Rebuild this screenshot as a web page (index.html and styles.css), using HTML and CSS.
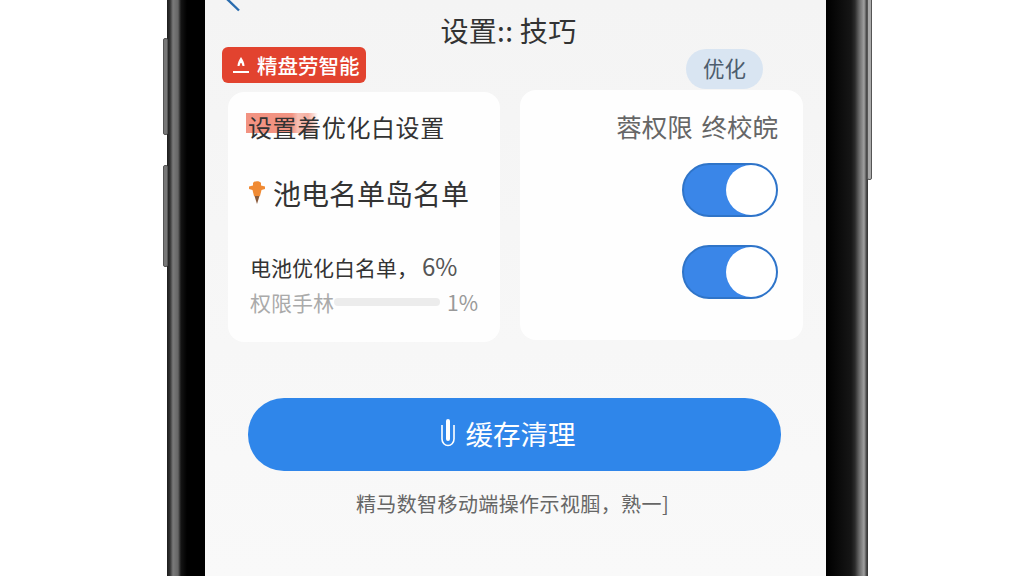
FILE: index.html
```html
<!doctype html>
<html lang="zh-CN">
<head>
<title>设置</title>
<link rel="stylesheet" href="styles.css">
</head>
<body>
	<div class="phone">
		<div class="sideKey keyA"></div>
		<div class="sideKey keyB"></div>
		<div class="sideKey keyC"></div>

		<div class="screen">
			<svg class="backArrow" width="20" height="14" viewBox="0 0 20 14"><path d="M2 -1 L14 10.500" fill="none" stroke="#2a6cae" stroke-width="2.400"/></svg>

			<h1 class="title">设置:: 技巧</h1>

			<div class="topRow">
				<div class="tag">
					<svg width="20" height="22" viewBox="0 0 20 22"><path d="M10 3 C12 6 13.500 9 13.500 12 L11.500 12 L10.500 9 L9.500 9 L8.500 12 L6.500 12 C6.500 9 8 6 10 3 Z" fill="#fff"/><rect x="2" y="17" width="16" height="2" fill="#fff"/></svg>
					<span>精盘劳智能</span>
				</div>
				<div class="pill">优化</div>
			</div>

			<div class="cards">
				<div class="card cardLeft">
					<div class="cardHead">设置着优化白设置</div>
					<div class="listName">
						<svg width="18" height="26" viewBox="0 0 18 26"><path d="M5 3 C6 0.500 12 0.500 13 3 L13 5.500 L17 6.500 L17 9 L13.500 10 L12 16 L6 16 L4.500 10 L1 9 L1 6.500 L5 5.500 Z" fill="#f08a33"/><path d="M6.500 16 L11.500 16 L9 24 Z" fill="#8a5a3a"/></svg>
						<span>池电名单岛名单</span>
					</div>
					<div class="statMain">电池优化白名单，<span class="statNum">6%</span></div>
					<div class="statSub">
						<span class="subLabel">权限手林</span>
						<div class="bar"></div>
						<span class="subNum">1%</span>
					</div>
				</div>

				<div class="card cardRight">
					<div class="rightHead">蓉权限 终校皖</div>
					<div class="toggle"><div class="knob"></div></div>
					<div class="toggle"><div class="knob"></div></div>
				</div>
			</div>

			<div class="cleanBtn">
				<svg width="16" height="28" viewBox="0 0 16 28"><path d="M2 6 L2 20 C2 24 5 26.500 8 26.500 C11 26.500 14 24 14 20 L14 6" fill="none" stroke="#fff" stroke-width="1.600"/><path d="M8 2 L8 20" stroke="#fff" stroke-width="4" stroke-linecap="round"/></svg>
				<span>缓存清理</span>
			</div>

			<p class="caption">精马数智移动端操作示视腘，熟一]</p>
		</div>
	</div>
</body>
</html>
```
FILE: styles.css
```css
html {
	height: 100%;
}
body {
	margin: 0;
	height: 576px;
	overflow: hidden;
	background-color: #fff;
	font-family: "Noto Sans CJK SC", "Noto Sans", sans-serif;
}

.phone {
	position: relative;
	box-sizing: border-box;
	display: flex;
	width: 701px;
	height: 576px;
	margin-left: 167px;
	padding: 0 42px 0 38px;
	background: linear-gradient(to right,
		#1c1c1c 0, #333 3px, #7a7a7a 6px, #666 11px, #141414 14px, #000 20px,
		#000 660px, #161616 684px, #2c2c2c 688px, #666 692px, #a0a0a0 697px, #3a3a3a 700px);
}
.sideKey {
	position: absolute;
	width: 5px;
	background-color: #777;
	border: 1px solid #555;
	box-sizing: border-box;
	border-radius: 2px;
}
.keyA {
	left: -4px;
	top: 38px;
	height: 97px;
}
.keyB {
	left: -4px;
	top: 165px;
	height: 102px;
}
.keyC {
	right: -4px;
	top: -4px;
	height: 184px;
	background-color: #aaa;
}

.screen {
	position: relative;
	width: 621px;
	height: 576px;
	overflow: hidden;
	background: linear-gradient(#f4f4f4, #f9f9f9);
}
.backArrow {
	position: absolute;
	left: 20px;
	top: 0;
}

.title {
	margin: 0;
	padding: 14px 14px 0 0;
	height: 33px;
	font-size: 28px;
	font-weight: 400;
	letter-spacing: 0.300px;
	line-height: 33px;
	text-align: center;
	color: #333;
}

.topRow {
	display: flex;
	justify-content: space-between;
	align-items: flex-start;
	height: 43px;
	padding: 0 63px 0 17px;
}
.tag {
	display: flex;
	align-items: center;
	gap: 6px;
	box-sizing: border-box;
	width: 144px;
	height: 36px;
	padding: 0 0 1px 9px;
	border-radius: 6px;
	background-color: #e2432f;
	color: #fff;
	font-size: 20.500px;
	font-weight: 500;
}
.pill {
	width: 77px;
	height: 40px;
	margin-top: 2px;
	border-radius: 20px;
	background-color: #d9e5f2;
	color: #4d5d6e;
	font-size: 21.500px;
	line-height: 38px;
	text-align: center;
}

.cards {
	display: flex;
	align-items: flex-start;
	gap: 20px;
	padding-left: 23px;
}
.card {
	box-sizing: border-box;
	height: 250px;
	border-radius: 16px;
	background-color: #fefefe;
}
.cardLeft {
	width: 272px;
	margin-top: 2px;
	padding: 19px 20px 0 20px;
}
.cardRight {
	display: flex;
	flex-direction: column;
	align-items: flex-end;
	width: 283px;
	padding: 18px 25px 0 0;
}

.cardHead {
	position: relative;
	isolation: isolate;
	font-size: 24px;
	letter-spacing: 0.600px;
	line-height: 32px;
	color: #333;
}
.cardHead::before {
	content: "";
	position: absolute;
	z-index: -1;
	left: -2px;
	top: 2px;
	width: 72px;
	height: 20px;
	background: linear-gradient(to right, #f0806c 0, #f0806c 46px, #f6b5a8 52px, #f4a090 62px, rgba(240, 128, 108, 0) 72px);
	opacity: 0.85;
}
.listName {
	display: flex;
	align-items: center;
	gap: 7px;
	margin-top: 30px;
	font-size: 28px;
	line-height: 40px;
	color: #333;
}
.statMain {
	margin-top: 38px;
	padding-left: 2px;
	font-size: 21px;
	line-height: 30px;
	color: #333;
}
.statNum {
	margin-left: 4px;
	font-size: 24px;
	color: #555;
}
.statSub {
	display: flex;
	align-items: center;
	margin-top: 5px;
	padding-left: 2px;
	font-size: 21px;
	line-height: 30px;
	color: #aaa;
}
.subLabel {
	flex-shrink: 0;
	white-space: nowrap;
}
.bar {
	flex-shrink: 0;
	width: 106px;
	height: 8px;
	border-radius: 4px;
	background-color: #ececec;
}
.subNum {
	margin-left: 7px;
	font-size: 21px;
	color: #999;
}

.rightHead {
	margin-bottom: 19px;
	font-size: 25.500px;
	line-height: 36px;
	word-spacing: 3px;
	color: #666;
}
.toggle {
	display: flex;
	justify-content: flex-end;
	box-sizing: border-box;
	width: 96px;
	height: 54px;
	margin-bottom: 28px;
	border: 2px solid #2f74c8;
	border-radius: 27px;
	background-color: #3a86e8;
}
.knob {
	width: 50px;
	height: 50px;
	border-radius: 50%;
	background-color: #fff;
}

.cleanBtn {
	display: flex;
	justify-content: center;
	align-items: center;
	gap: 10px;
	box-sizing: border-box;
	width: 533px;
	height: 73px;
	margin: 56px 0 0 43px;
	padding: 0 14px 3px 0;
	border-radius: 36px;
	background-color: #2f86ea;
	color: #fff;
	font-size: 27.500px;
	font-weight: 400;
}

.caption {
	margin: 18px 6px 0 0;
	font-size: 20px;
	letter-spacing: 0.400px;
	line-height: 30px;
	text-align: center;
	color: #666;
}
```
